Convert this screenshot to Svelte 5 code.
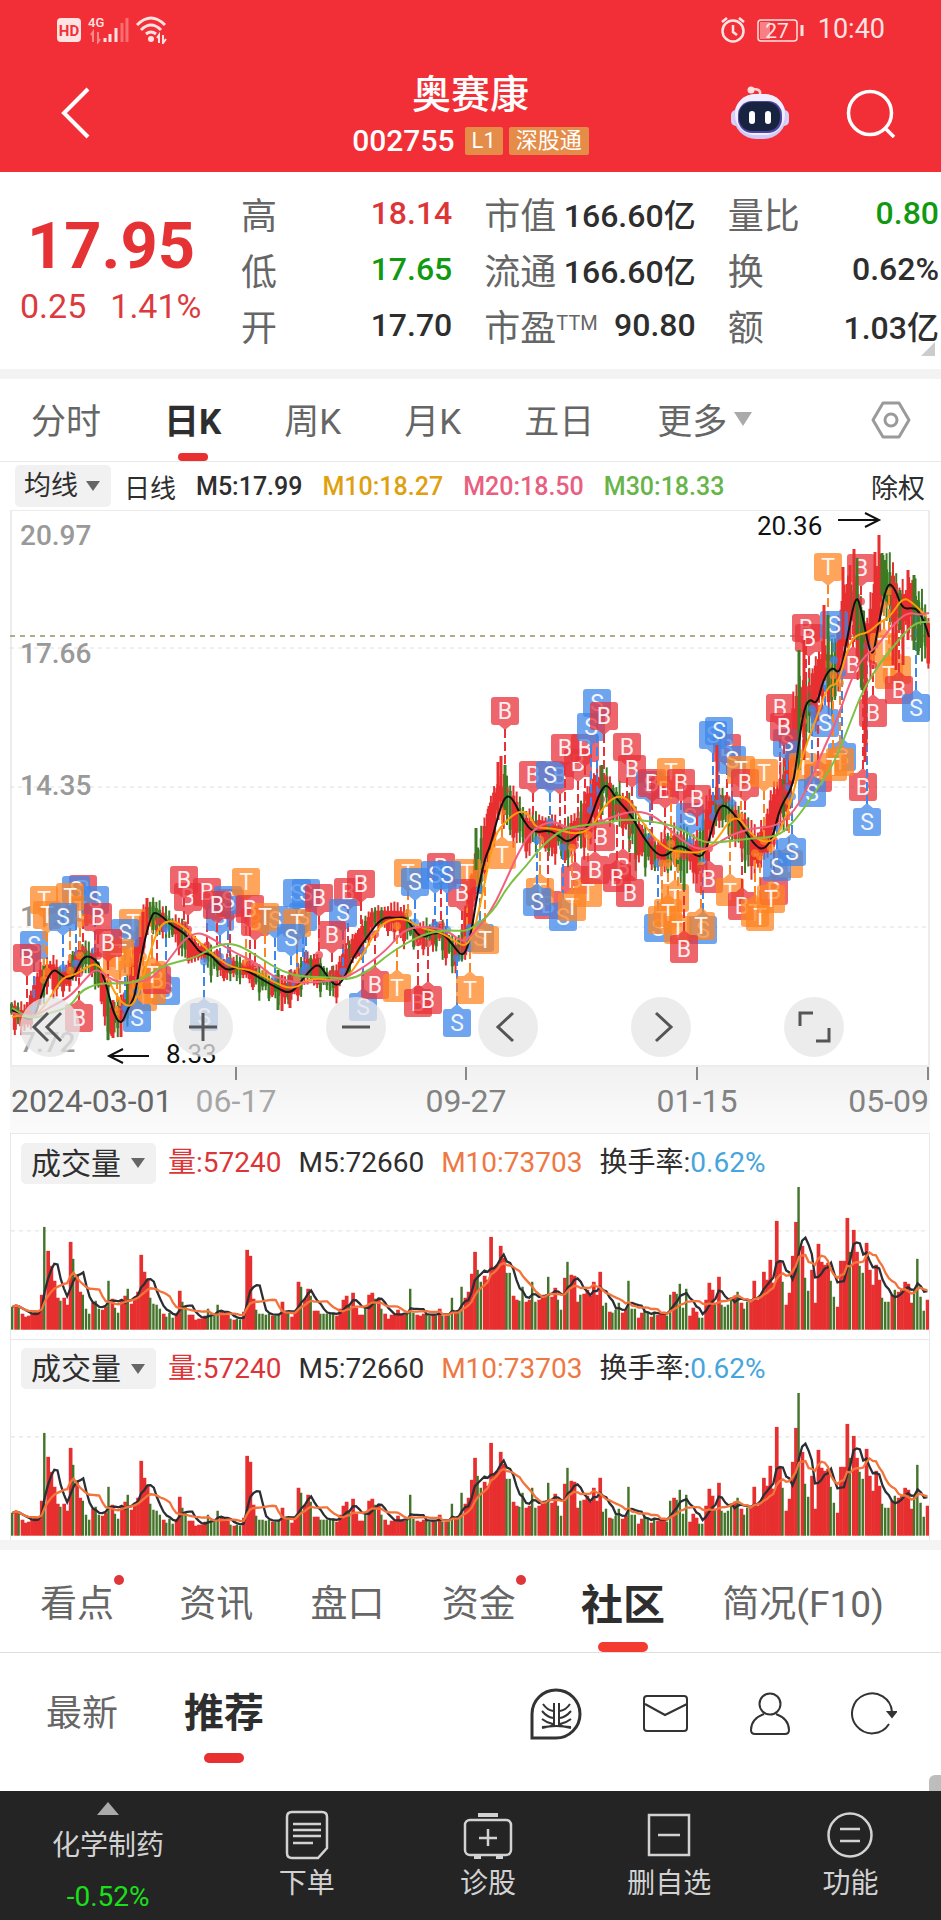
<script>
    let period = "日K";
    let section = "社区";
    let feed = "推荐";

    const periods = ["分时", "日K", "周K", "月K", "五日", "更多"];
    const sections = [
        { name: "看点", dot: true },
        { name: "资讯" },
        { name: "盘口" },
        { name: "资金", dot: true },
        { name: "社区" },
        { name: "简况(F10)" },
    ];
    const feeds = ["最新", "推荐"];

    const quotes = [
        [
            { label: "高", value: "18.14", tone: "up" },
            { label: "低", value: "17.65", tone: "down" },
            { label: "开", value: "17.70" },
        ],
        [
            { label: "市值", value: "166.60亿" },
            { label: "流通", value: "166.60亿" },
            { label: "市盈", sup: "TTM", value: "90.80" },
        ],
        [
            { label: "量比", value: "0.80", tone: "down" },
            { label: "换", value: "0.62%" },
            { label: "额", value: "1.03亿" },
        ],
    ];

    // volume per day, negative = the day closed lower
    const volumes = [
        -23, 25, -22, 16, 13, 14, 17, 18, 18, 35, -103, 79, 64, 49, 32, -29, 32, 25, 88, -71,
        55, 38, -35, -21, -16, 27, -29, -21, 20, 23, -49, 31, -22, -17, 30, 34, -41, 26, 31, 38,
        75, 58, 50, -32, -26, -25, -21, 16, -13, -17, -12, 16, 39, -28, -23, 15, 15, 10, 11, 11,
        14, -21, -15, -16, -25, 18, 15, 15, -11, 10, -11, -10, 18, 80, 74, 31, -20, -16, -16, -15,
        -16, 14, -14, -16, 28, 18, -17, 13, 17, 48, -43, 31, 41, -34, 19, 19, -16, -16, -16, -16,
        -17, 14, 21, 30, 34, -25, 37, 22, 15, 15, -22, 35, 37, -31, 31, -21, 16, 11, 15, 15,
        20, 15, 15, -16, -41, -17, 15, 14, 16, -16, -14, 15, -14, 21, -14, 14, -14, -32, 17, -18,
        -43, 32, 38, 56, 78, -60, -48, 54, 50, 93, 63, 65, 84, 72, -57, -57, 34, 30, -29, -43,
        28, 30, -48, -28, 30, 32, 33, -53, 33, 42, -30, -20, 52, -68, 55, 54, 28, -35, 36, 40,
        34, 48, 35, 58, -24, -27, 18, -17, -20, -27, 17, 20, -49, -21, -21, 12, 17, -20, -17, 13,
        -18, 15, 17, 18, -14, -35, 38, -36, -46, -22, -41, 14, 22, 18, -12, -12, 30, 47, 40, -26,
        53, -25, -23, -25, -31, 34, -38, 27, -21, -28, 30, 49, 30, 35, 58, 50, 70, 47, 109, 68,
        -48, 25, 37, 74, 108, -143, 84, -52, -39, 60, 27, 86, 68, 65, 67, -49, -33, 23, 69, 69,
        112, -78, 100, 78, -64, -57, 87, 60, 45, 65, 50, -32, -28, -28, 35, -40, 38, 41, 48, 46,
        27, -40, -71, -33, -19, 30,
    ];

    const step = 920 / volumes.length;

    function average(count) {
        return volumes
            .map((_, i) => {
                const part = volumes.slice(Math.max(0, i - count + 1), i + 1);
                const mean = part.reduce((sum, v) => sum + Math.abs(v), 0) / part.length;
                return `${((i + 0.5) * step).toFixed(1)},${(146 - mean).toFixed(1)}`;
            })
            .join(" ");
    }
    const volumeM5 = average(5);
    const volumeM10 = average(10);

    const m5 =
        "12,1010 18,1012 27,1020 35,1017 42,993 48,977 54,969 60,974 67,979 73,978 78,967 83,958 88,956 95,959 100,967 107,987 113,1012 121,1026 128,1008 135,997 140,963 147,930 152,915 155,912 163,917 172,926 183,932 193,943 200,953 210,954 217,962 227,971 237,967 250,972 263,980 277,988 290,994 300,983 310,970 319,963 328,978 337,987 345,977 353,957 367,937 382,917 397,918 405,917 413,928 421,938 433,933 443,933 453,945 463,958 470,940 478,890 485,858 490,847 497,820 503,800 509,795 515,803 523,820 533,833 550,830 560,837 568,843 580,833 588,827 597,800 603,787 608,785 617,800 630,813 643,837 657,855 667,856 677,845 687,848 700,859 707,848 715,817 722,803 733,812 743,828 757,848 765,849 773,837 780,807 793,787 798,750 803,713 809,698 817,705 823,680 832,666 840,675 847,640 856,592 862,613 872,663 878,627 887,582 895,588 902,609 913,608 918,610 925,623 929,637";
    const m10 =
        "12,1017 20,1015 33,1018 43,1008 53,993 63,977 75,975 87,967 97,963 107,977 117,997 128,1008 137,1000 147,963 157,930 167,920 180,923 200,943 217,958 233,968 253,970 273,982 293,990 310,978 333,980 347,978 360,960 380,923 403,917 420,928 440,932 453,940 465,947 472,937 480,907 493,840 503,823 520,810 530,815 535,828 553,828 577,835 593,827 603,807 617,795 630,800 647,830 667,850 683,852 703,853 717,840 735,812 753,837 767,843 777,837 790,807 803,753 817,717 828,685 838,685 847,650 855,635 868,633 880,622 890,617 903,597 913,603 927,617";
    const m20 =
        "12,1013 33,1018 50,1007 70,997 87,977 97,968 107,977 120,983 137,982 150,980 167,963 183,940 197,932 210,937 233,952 257,963 273,977 293,982 307,983 340,980 360,970 387,950 403,930 423,926 447,930 463,943 472,935 490,913 503,887 518,853 532,830 552,820 567,828 587,830 610,817 637,810 657,817 677,837 703,853 730,835 753,828 773,827 790,817 807,790 823,750 837,720 850,682 862,658 877,647 890,628 907,612 920,615 929,613";
    const m30 =
        "12,1008 20,1013 32,1019 50,1013 70,1007 80,992 93,985 107,983 127,984 143,979 160,967 177,962 197,957 213,947 228,943 243,947 263,960 283,972 303,977 330,977 350,980 370,970 390,953 417,937 440,930 460,931 470,930 493,912 507,887 527,865 540,848 557,833 570,827 603,823 627,819 657,822 680,828 703,843 723,842 753,838 777,837 793,823 810,800 823,780 837,757 850,723 863,690 880,663 893,647 907,630 918,622 929,622";

    const m5Points = m5.split(" ").map((p) => p.split(",").map(Number));

    function m5At(x) {
        const next = m5Points.findIndex((p) => p[0] >= x);
        if (next == -1) return m5Points[m5Points.length - 1][1];
        if (next == 0) return m5Points[0][1];
        const [x0, y0] = m5Points[next - 1];
        const [x1, y1] = m5Points[next];
        return y0 + ((y1 - y0) * (x - x0)) / (x1 - x0);
    }

    // rounds the corners of an average line
    function smooth(points) {
        const p = points.split(" ").map((s) => s.split(",").map(Number));
        let d = `M${p[0]}`;
        for (let i = 1; i < p.length - 1; i++) {
            d += ` Q${p[i]} ${(p[i][0] + p[i + 1][0]) / 2},${(p[i][1] + p[i + 1][1]) / 2}`;
        }
        return d + ` L${p[p.length - 1]}`;
    }

    const averages = [
        { color: "#111", d: smooth(m5) },
        { color: "#ff9d0a", d: smooth(m10) },
        { color: "#f2607d", d: smooth(m20) },
        { color: "#7cc142", d: smooth(m30) },
    ];

    const candles = volumes.map((v, i) => {
        const x = 10 + (i + 0.5) * step;
        const here = m5At(x + 2);
        const ahead = m5At(x + 9);
        const wave = Math.sin(i * 12.9898) * 43758.5453;
        const noise = wave - Math.floor(wave);
        const reach = x > 780 ? 17 : x > 480 ? 12 : 8;
        const mid = (here + ahead) / 2 + (noise - 0.5) * reach;
        const body = reach * (0.4 + noise * 0.9) + Math.abs(ahead - here) * 0.4;
        const wick = body + reach * (0.2 + ((noise * 7) % 1));
        return { x, mid, body, wick, up: v > 0 };
    });

    // long single-day ranges: x, high, low, rising
    const extremes = [
        [108, 985, 1040, 0], [113, 1000, 1038, 1], [121, 1010, 1037, 1], [147, 898, 935, 1],
        [153, 902, 930, 0], [143, 912, 950, 1], [278, 970, 1010, 0], [282, 975, 1011, 1],
        [290, 970, 1008, 1], [501, 756, 800, 1], [498, 762, 820, 1], [505, 765, 810, 0],
        [476, 828, 870, 0], [489, 806, 850, 1], [602, 765, 815, 0], [595, 775, 830, 1],
        [684, 860, 890, 0], [717, 745, 800, 1], [799, 650, 770, 0], [804, 640, 760, 1],
        [824, 605, 680, 1], [828, 615, 690, 0], [843, 567, 640, 1], [850, 565, 640, 1],
        [854, 549, 610, 1], [857, 558, 640, 0], [866, 640, 745, 1], [862, 610, 690, 0],
        [865, 650, 762, 1], [875, 552, 620, 1], [879, 535, 580, 1], [882, 553, 595, 0],
        [885, 560, 590, 0], [893, 580, 665, 1], [896, 583, 670, 1], [900, 590, 630, 0],
        [903, 600, 665, 1], [908, 570, 640, 1], [911, 583, 600, 1], [914, 575, 650, 0],
        [918, 600, 655, 0], [921, 625, 648, 0], [928, 632, 648, 1],
    ];

    const markers = [
        ["S", 34, 945], ["B", 27, 958], ["T", 44, 900], ["T", 47, 915], ["B", 83, 889], ["S", 76, 890],
        ["T", 80, 910], ["S", 95, 900], ["T", 70, 897], ["S", 63, 917], ["B", 98, 917], ["T", 133, 923],
        ["S", 125, 933], ["T", 120, 953], ["T", 117, 962], ["B", 108, 943], ["B", 79, 1018], ["S", 166, 991],
        ["T", 143, 997], ["T", 152, 990], ["B", 157, 980], ["T", 152, 975], ["S", 137, 1018],
        ["B", 188, 897], ["B", 184, 880], ["S", 204, 1017], ["B", 207, 892], ["S", 220, 917], ["B", 230, 903],
        ["S", 228, 900], ["B", 217, 905], ["T", 246, 882], ["B", 255, 922], ["B", 250, 909], ["S", 275, 920],
        ["T", 265, 917], ["S", 297, 893], ["S", 306, 893], ["S", 303, 917], ["T", 297, 923], ["S", 291, 938],
        ["B", 319, 898], ["B", 348, 892], ["S", 343, 913], ["B", 361, 884], ["B", 332, 935],
        ["S", 363, 1007], ["B", 375, 985], ["T", 397, 988], ["B", 418, 1003], ["B", 428, 1000],
        ["T", 408, 873], ["B", 441, 867], ["S", 415, 882], ["T", 467, 873], ["B", 462, 893], ["S", 435, 875],
        ["S", 447, 875], ["S", 457, 1023], ["T", 470, 990], ["S", 480, 938], ["T", 485, 940], ["T", 502, 855],
        ["B", 505, 711], ["B", 533, 775], ["B", 560, 776], ["S", 550, 775], ["B", 578, 763], ["B", 565, 748],
        ["B", 585, 748], ["S", 597, 703], ["S", 591, 727], ["B", 604, 716], ["B", 627, 747], ["B", 632, 769],
        ["S", 650, 785], ["B", 652, 783], ["B", 665, 790], ["T", 671, 772], ["B", 681, 783], ["S", 690, 817],
        ["B", 697, 799], ["B", 727, 748], ["S", 713, 735], ["S", 719, 731], ["S", 732, 760], ["T", 741, 770],
        ["B", 745, 783], ["T", 764, 773], ["B", 780, 708], ["S", 787, 743], ["B", 784, 727], ["B", 806, 628],
        ["B", 809, 638], ["T", 828, 567], ["S", 834, 625], ["B", 861, 568], ["B", 853, 665], ["T", 884, 647],
        ["T", 897, 670], ["T", 889, 675], ["B", 899, 690], ["S", 916, 708], ["B", 873, 713], ["B", 863, 787],
        ["S", 867, 822], ["S", 825, 723], ["B", 818, 778], ["T", 803, 767], ["S", 812, 793], ["S", 842, 757],
        ["T", 840, 762], ["T", 833, 767], ["B", 601, 837], ["B", 548, 905], ["T", 540, 892], ["S", 537, 902],
        ["B", 575, 880], ["S", 563, 917], ["T", 572, 907], ["T", 588, 893], ["B", 595, 870], ["B", 623, 867],
        ["B", 617, 878], ["B", 630, 893], ["S", 658, 928], ["T", 675, 898], ["T", 662, 920], ["T", 668, 913],
        ["T", 678, 930], ["S", 703, 930], ["T", 701, 926], ["B", 684, 949], ["B", 709, 879], ["T", 730, 892],
        ["B", 742, 906], ["T", 755, 913], ["T", 760, 917], ["B", 774, 891], ["T", 771, 899], ["T", 789, 864],
        ["S", 777, 867], ["S", 792, 852],
    ].map(([kind, x, y]) => {
        const target = m5At(x);
        const side = target > y ? 1 : -1;
        return { kind, x, y, side, end: Math.abs(target - y) > 24 ? target - side * 8 : y + side * 20 };
    });
    const markerColors = { B: "#e8323a", S: "#3f87ea", T: "#fd8524" };

    const priceLabels = [
        [545, "20.97"],
        [663, "17.66"],
        [795, "14.35"],
        [926, "11.04"],
        [1052, "7.72"],
    ];
    const dateTicks = [
        [236, "06-17"],
        [466, "09-27"],
        [697, "01-15"],
    ];

    const tools = [
        { name: "最早", d: "M28 16 14 30 28 44M41 16 27 30 41 44" },
        { name: "放大", d: "M16 30H44M30 16V44" },
        { name: "缩小", d: "M16 30H44" },
        { name: "左移", d: "M35 16 20 30 35 44" },
        { name: "右移", d: "M25 16 40 30 25 44" },
        { name: "全屏", d: "M16 29V16H29M45 31V44H32" },
    ];
</script>

<div class="app">
    <header>
        <div class="status">
            <svg width="112" height="30" viewBox="0 0 112 30" fill="none" aria-hidden="true">
                <rect y="4" width="24" height="24" rx="4" fill="#ffe3e3" />
                <text x="12" y="22" text-anchor="middle" font-size="15" font-weight="700" fill="#f23036">HD</text>
                <text x="31" y="13" font-size="13" font-weight="500" fill="#ffe3e3">4G</text>
                <g stroke="#ffe3e3" stroke-width="3">
                    <path d="M48 28V24M53 28V20M59 28V14" />
                    <path opacity=".35" d="M65 28V9M70 28V4" />
                    <path opacity=".5" stroke-width="2" d="M34 21 36 18V28M41 18V28L43 25" />
                </g>
                <g stroke="#ffe3e3" stroke-width="3">
                    <path d="M80 11Q94 -3 108 11M84 16Q94 6 104 16M89 20Q94 16 99 20" />
                    <path stroke-width="2" d="M100 24 102 21V29M106 21V29L109 25" />
                </g>
                <circle cx="94" cy="25" r="3" fill="#ffe3e3" />
            </svg>
            <span class="spacer"></span>
            <svg width="84" height="30" viewBox="0 0 84 30" fill="none" stroke="#ffe3e3" aria-hidden="true">
                <g stroke-width="2.5">
                    <circle cx="13" cy="17" r="10.500" />
                    <path d="M13 11V18L17 21M2 8 7 4M24 8 19 4" />
                </g>
                <rect x="38" y="6" width="39" height="21" rx="3" stroke-width="1.500" />
                <rect x="40" y="8" width="10" height="17" fill="#ffe3e3" opacity=".45" stroke="none" />
                <path d="M82 11V22" stroke-width="3" />
                <text x="57" y="24" text-anchor="middle" font-size="21" fill="#ffe3e3" stroke="none">27</text>
            </svg>
            <time>10:40</time>
        </div>
        <div class="title-bar">
            <button class="back" aria-label="返回">
                <svg width="30" height="52" viewBox="0 0 30 52" fill="none" stroke="#fff" stroke-width="4">
                    <path d="M27 2 3 26 27 50" />
                </svg>
            </button>
            <div class="title">
                <h1>奥赛康</h1>
                <div class="code">
                    <span class="number">002755</span>
                    <span class="tag">L1</span>
                    <span class="tag">深股通</span>
                </div>
            </div>
            <div class="actions">
                <button aria-label="智能助手">
                    <svg width="58" height="54" viewBox="0 0 58 54">
                        <path d="M29 9C30 4 27 3 21 3" fill="none" stroke="#ffd5d8" stroke-width="2.500" />
                        <circle cx="20" cy="4" r="3.500" fill="#ffdfe2" />
                        <rect x="0" y="24" width="10" height="16" rx="5" fill="#d6d0f8" />
                        <rect x="48" y="24" width="10" height="16" rx="5" fill="#d6d0f8" />
                        <rect x="3" y="8" width="52" height="45" rx="22" fill="#cfcaf8" />
                        <rect x="4" y="8" width="50" height="41" rx="20" fill="#f0edff" />
                        <rect x="7" y="15" width="44" height="32" rx="14" fill="#4c46a0" />
                        <rect x="8" y="16" width="41" height="29" rx="13" fill="#18243f" />
                        <rect x="18" y="25" width="6" height="13" rx="3" fill="#fff" />
                        <rect x="34" y="25" width="6" height="13" rx="3" fill="#fff" />
                    </svg>
                </button>
                <button aria-label="搜索">
                    <svg width="50" height="50" viewBox="0 0 50 50" fill="none" stroke="#fff" stroke-width="3.500">
                        <circle cx="24" cy="25" r="21.500" />
                        <path d="M39 40 48 49" />
                    </svg>
                </button>
            </div>
        </div>
    </header>

    <section class="quote">
        <div class="price">
            <strong>17.95</strong>
            <div class="change"><span>0.25</span><span>1.41%</span></div>
        </div>
        {#each quotes as column}
            <dl>
                {#each column as item}
                    <div>
                        <dt>{item.label}{#if item.sup}<sup>{item.sup}</sup>{/if}</dt>
                        <dd class={item.tone}>{item.value}</dd>
                    </div>
                {/each}
            </dl>
        {/each}
        <i class="corner"></i>
    </section>

    <nav class="periods">
        {#each periods as name}
            <button class:active={period == name} on:click={() => (period = name)}>
                {name}
                {#if name == "更多"}<i class="caret light"></i>{/if}
            </button>
        {/each}
        <button class="settings" aria-label="设置">
            <svg width="40" height="38" viewBox="0 0 40 38" fill="none" stroke="#9a9a9a" stroke-width="3">
                <path d="M12 2H28L38 19 28 36H12L2 19Z" stroke-linejoin="round" />
                <circle cx="20" cy="19" r="6" />
            </svg>
        </button>
    </nav>

    <div class="legend">
        <label class="drop">
            <select aria-label="指标"><option>均线</option></select>
            <i class="caret"></i>
        </label>
        <span>日线</span>
        <span class="number">M5:17.99</span>
        <span class="number" style="color: #dfa010">M10:18.27</span>
        <span class="number" style="color: #e8607f">M20:18.50</span>
        <span class="number" style="color: #67b548">M30:18.33</span>
        <button>除权</button>
    </div>

    <div class="chart">
        <svg viewBox="10 510 920 623" role="img" aria-label="日K">
            <defs>
                <linearGradient id="axis" x1="0" y1="0" x2="0" y2="1">
                    <stop offset="0" stop-color="#f1f1f1" />
                    <stop offset="1" stop-color="#fbfbfb" />
                </linearGradient>
            </defs>
            <rect x="10" y="1066" width="920" height="67" fill="url(#axis)" />
            <rect x="11" y="510" width="918" height="556" fill="#fff" stroke="#ececec" stroke-width="2" />
            <path d="M10 648H930M10 787H930M10 927H930" stroke="#e0e0e0" stroke-dasharray="4 4" />
            <g class="axis-text">
                {#each priceLabels as [y, text]}
                    <text x="20" {y}>{text}</text>
                {/each}
            </g>
            <path d="M10 636H930" stroke="#b0ad86" stroke-width="2" stroke-dasharray="5 5" />

            {#each candles as c}
                <path
                    d="M{c.x} {c.mid - c.wick}V{c.mid + c.wick}"
                    stroke={c.up ? "#e03030" : "#3c7a24"}
                    stroke-width="2"
                />
                <path
                    d="M{c.x} {c.mid - c.body}V{c.mid + c.body}"
                    stroke={c.up ? "#e82f2f" : "#3c7a24"}
                    stroke-width={c.up ? 4 : 3}
                />
            {/each}

            {#each markers as m}
                <g stroke={markerColors[m.kind]} fill={markerColors[m.kind]}>
                    <path d="M{m.x} {m.y + m.side * 18}V{m.end}" stroke-width="2" stroke-dasharray="9 4" />
                    <circle cx={m.x} cy={m.end} r="4" stroke="none" opacity=".7" />
                    <path
                        d="M{m.x - 6} {m.y + m.side * 14}L{m.x} {m.y + m.side * 19}L{m.x + 6} {m.y + m.side * 14}Z"
                        stroke="none"
                        opacity=".75"
                    />
                    <rect x={m.x - 14} y={m.y - 14} width="28" height="28" rx="3" stroke="none" opacity=".75" />
                </g>
                <text class="mark" x={m.x} y={m.y + 8} opacity=".9">{m.kind}</text>
            {/each}

            {#each extremes as [x, high, low, up]}
                <path d="M{x} {high}V{low}" stroke={up ? "#e82f2f" : "#3c7a24"} stroke-width="3" />
            {/each}

            {#each averages as line}
                <path d={line.d} fill="none" stroke={line.color} stroke-width="2" />
            {/each}

            <g class="peak">
                <text x="757" y="535">20.36</text>
                <text x="166" y="1063">8.33</text>
                <path d="M838 520H879M865 513 879 520 865 527" />
                <path d="M149 1056H109M123 1049 109 1056 123 1063" />
            </g>

            <g class="dates">
                <text x="11" y="1112" fill="#666">2024-03-01</text>
                {#each dateTicks as [x, text], i}
                    <path d="M{x} 1067V1080" />
                    <text {x} y="1112" text-anchor="middle" fill={i == 0 ? "#a6a6a6" : "#828282"}>{text}</text>
                {/each}
                <path d="M928 1067V1080" />
                <text x="929" y="1112" text-anchor="end" fill="#828282">05-09</text>
            </g>
        </svg>
        <div class="tools">
            {#each tools as tool}
                <button aria-label={tool.name}>
                    <svg viewBox="0 0 60 60" fill="none" stroke="#555" stroke-width="3"><path d={tool.d} /></svg>
                </button>
            {/each}
        </div>
    </div>

    {#each [1, 2] as panel}
        <section class="volume">
            <div class="legend">
                <label class="drop">
                    <select aria-label="副图指标 {panel}"><option>成交量</option></select>
                    <i class="caret"></i>
                </label>
                <span style="color: #dc3538">量:57240</span>
                <span>M5:72660</span>
                <span style="color: #ee7843">M10:73703</span>
                <span>换手率:<em>0.62%</em></span>
            </div>
            <svg viewBox="0 0 920 155" role="img" aria-label="成交量">
                <path d="M0 47H920" stroke="#e0e0e0" stroke-dasharray="4 4" />
                {#each volumes as v, i}
                    <rect
                        x={i * step}
                        y={146 - Math.abs(v)}
                        width={v > 0 ? step + 0.5 : step - 0.8}
                        height={Math.abs(v)}
                        fill={v > 0 ? "#e72f2f" : "#44742a"}
                    />
                {/each}
                <polyline points={volumeM5} stroke="#2b2f33" />
                <polyline points={volumeM10} stroke="#f4733a" />
            </svg>
        </section>
    {/each}

    <nav class="sections">
        {#each sections as item}
            <button
                class:active={section == item.name}
                class:dot={item.dot}
                on:click={() => (section = item.name)}
            >
                {item.name}
            </button>
        {/each}
    </nav>

    <div class="feed">
        {#each feeds as name}
            <button class:active={feed == name} on:click={() => (feed = name)}>{name}</button>
        {/each}
        <div class="feed-icons">
            <button aria-label="社区话题">
                <svg width="52" height="52" viewBox="0 0 52 52">
                    <path stroke-width="3" d="M2 50V26A24 24 0 1 1 26 50Z" />
                    <path d="M24 15V37Q20 39 12 39M29 15V37Q33 39 41 39M12 40Q26 36 41 40M13 16Q17 22 23 23M12 23Q17 29 23 30M12 31Q17 35 23 36M40 16Q36 22 30 23M41 23Q36 29 30 30M41 31Q36 35 30 36" />
                </svg>
            </button>
            <button aria-label="消息">
                <svg width="46" height="38" viewBox="0 0 46 38">
                    <rect x="1" y="1" width="43" height="35" rx="3" />
                    <path d="M2 9 22 20 44 9" />
                </svg>
            </button>
            <button aria-label="我的">
                <svg width="40" height="44" viewBox="0 0 40 44">
                    <circle cx="20" cy="12" r="10.500" />
                    <path d="M14 22Q1 27 1 38 1 42 5 42H35Q39 42 39 38 39 27 26 22" />
                </svg>
            </button>
            <button aria-label="刷新">
                <svg width="46" height="44" viewBox="0 0 46 44">
                    <path d="M38 32A20 20 0 1 1 41 20" />
                    <path d="M37 20H45L41 25Z" fill="#333" />
                </svg>
            </button>
        </div>
        <i class="scroll"></i>
    </div>

    <footer>
        <button class="industry">
            <i class="up-caret"></i>
            <span>化学制药</span>
            <b>-0.52%</b>
        </button>
        <button>
            <svg width="44" height="50" viewBox="0 0 44 50">
                <path d="M7 2H37Q42 2 42 7V38L33 48H7Q2 48 2 43V7Q2 2 7 2Z" />
                <path d="M8 14H36M8 20H36M8 26H36M8 33H28" />
            </svg>
            下单
        </button>
        <button>
            <svg width="50" height="50" viewBox="0 0 50 50">
                <path d="M15 5H35M11 47H18M33 47H40" stroke-width="4" />
                <rect x="2" y="10" width="46" height="35" rx="5" />
                <path d="M25 19V36M16 28H34" />
            </svg>
            诊股
        </button>
        <button>
            <svg width="44" height="50" viewBox="0 0 44 50">
                <rect x="2" y="5" width="40" height="40" />
                <path d="M11 25H33" />
            </svg>
            删自选
        </button>
        <button>
            <svg width="46" height="50" viewBox="0 0 46 50">
                <circle cx="23" cy="25" r="21.500" />
                <path d="M13 19H33M13 31H33" />
            </svg>
            功能
        </button>
    </footer>
</div>

<style>
    :global(body) {
        background: #fff;
    }

    .app {
        font-family: Roboto, "Noto Sans CJK SC", sans-serif;
        color: #2e2e2e;
        overflow: hidden;
    }

    button,
    select {
        margin: 0;
        padding: 0;
        border: 0;
        background: none;
        color: inherit;
        font: inherit;
        white-space: nowrap;
    }

    svg {
        display: block;
    }

    header {
        background: #f22f36;
        color: #fff;
    }

    .status {
        display: flex;
        align-items: center;
        height: 58px;
        padding: 0 58px 0 57px;
        font-size: 27px;
        color: #ffe3e3;
    }

    .spacer {
        flex: 1;
    }

    .status time {
        margin-left: 14px;
        margin-right: -2px;
    }

    .title-bar {
        display: grid;
        grid-template-columns: 1fr auto 1fr;
        align-items: center;
        height: 114px;
        padding: 0 45px 4px;
        box-sizing: border-box;
    }

    .back {
        justify-self: start;
        margin-left: 16px;
    }

    .title {
        display: flex;
        flex-direction: column;
        align-items: center;
        gap: 4px;
    }

    h1 {
        margin: 0;
        font-size: 39px;
        font-weight: 500;
        line-height: 52px;
    }

    .code {
        display: flex;
        align-items: center;
        gap: 6px;
        line-height: 32px;
    }

    .code .number {
        font-size: 30px;
        margin-right: 4px;
    }

    .tag {
        padding: 0 7px;
        border-radius: 2px;
        background: #e58c48;
        font-size: 22px;
        line-height: 28px;
    }

    .actions {
        justify-self: end;
        display: flex;
        align-items: center;
        gap: 57px;
    }

    .number {
        font-weight: 500;
    }

    .quote {
        position: relative;
        display: flex;
        gap: 32px;
        padding: 13px 2px 16px 20px;
        border-bottom: 10px solid #f3f3f3;
    }

    .price {
        flex: 1;
        display: flex;
        flex-direction: column;
        justify-content: center;
        gap: 2px;
        color: #e53235;
    }

    .price strong {
        padding-left: 7px;
        font-size: 65px;
        font-weight: 700;
        line-height: 72px;
    }

    .change {
        display: flex;
        gap: 24px;
        font-size: 34px;
        line-height: 44px;
        color: #dc3a3f;
        white-space: nowrap;
    }

    dl {
        flex: 0 0 23%;
        margin: 0;
    }

    dl div {
        display: flex;
        justify-content: space-between;
        align-items: center;
        height: 56px;
        white-space: nowrap;
    }

    dt {
        font-size: 36px;
        color: #666;
    }

    sup {
        font-size: 20px;
        line-height: 0;
        vertical-align: 11px;
    }

    dd {
        margin: 0;
        font-size: 32px;
        font-weight: 500;
    }

    .up {
        color: #dc3538;
    }

    .down {
        color: #119a11;
    }

    .corner {
        position: absolute;
        right: 6px;
        bottom: 13px;
        border-left: 14px solid transparent;
        border-bottom: 14px solid #ccc;
    }

    .periods {
        display: flex;
        gap: 63px;
        height: 82px;
        padding: 0 30px 0 31px;
        border-bottom: 1px solid #e8e8e8;
        font-size: 35px;
        color: #666;
    }

    .periods button,
    .sections button,
    .feed > button {
        position: relative;
        display: flex;
        align-items: center;
    }

    .periods button:not(.settings) {
        padding-bottom: 3px;
    }

    .periods .settings {
        margin-left: auto;
    }

    .active {
        font-weight: 700;
        color: #2e2e2e;
    }

    .active::after {
        content: "";
        position: absolute;
        left: 50%;
        bottom: 0;
        width: 30px;
        height: 8px;
        border-radius: 4px;
        background: #e83030;
        transform: translateX(-50%);
    }

    .caret {
        border: 7px solid transparent;
        border-top: 10px solid #666;
        border-bottom: 0;
    }

    .caret.light {
        margin-left: 7px;
        border-width: 14px 9px 0;
        border-top-color: #aaa;
    }

    .legend {
        display: flex;
        align-items: center;
        gap: 20px;
        height: 48px;
        padding: 0 16px 0 15px;
        font-size: 25px;
        white-space: nowrap;
    }

    .legend > :first-child {
        margin-right: -7px;
    }

    .legend > :nth-child(2) {
        font-size: 26px;
    }

    .legend button {
        margin-left: auto;
        font-size: 27px;
    }

    .drop {
        display: grid;
        align-items: center;
        border-radius: 5px;
        background: #f1f1f1;
    }

    .drop > * {
        grid-area: 1 / 1;
    }

    .drop select {
        appearance: none;
        height: 42px;
        padding: 0 33px 0 9px;
        font-size: 27px;
    }

    .drop .caret {
        justify-self: end;
        margin-right: 11px;
        pointer-events: none;
    }

    .chart {
        position: relative;
        margin: 0 11px 0 10px;
    }

    .axis-text {
        font-size: 28px;
        font-weight: 500;
        fill: #999;
    }

    .mark {
        font-size: 23px;
        text-anchor: middle;
        fill: #fff;
    }

    .peak {
        font-size: 26px;
        fill: #111;
    }

    .peak path {
        fill: none;
        stroke: #111;
        stroke-width: 2;
    }

    .dates {
        font-size: 32px;
    }

    .dates path {
        stroke: #888;
        stroke-width: 2;
    }

    .tools {
        position: absolute;
        left: 10px;
        right: 86px;
        bottom: 76px;
        display: flex;
        justify-content: space-between;
    }

    .tools button {
        width: 60px;
        height: 60px;
        border-radius: 50%;
        background: rgba(230, 230, 230, 0.75);
    }

    .volume {
        margin: 0 11px 0 10px;
        border: 1px solid #e8e8e8;
        border-bottom: 0;
    }

    .volume .legend {
        gap: 17px;
        height: 42px;
        padding: 8px 10px 0;
    }

    .volume .legend > :first-child {
        margin-right: -5px;
    }

    .volume .legend span {
        font-size: 28px;
        line-height: 42px;
    }

    .volume select {
        height: 41px;
        padding: 0 35px 0 10px;
        font-size: 30px;
    }

    .volume em {
        font-style: normal;
        color: #45a5dc;
    }

    polyline {
        fill: none;
        stroke-width: 2.3;
    }

    .sections {
        position: relative;
        display: flex;
        justify-content: space-between;
        height: 102px;
        margin-top: -4px;
        padding: 0 57px 0 40px;
        border-top: 10px solid #f5f4f4;
        border-bottom: 1px solid #dcdfdf;
        font-size: 37px;
        color: #666;
    }

    .sections .active {
        font-size: 42px;
    }

    .sections .active::after {
        width: 50px;
        height: 10px;
        border-radius: 5px;
        background: #f43b30;
    }

    .dot {
        padding-right: 8px;
    }

    .dot::before {
        content: "";
        position: absolute;
        top: 25px;
        right: -2px;
        width: 10px;
        height: 10px;
        border-radius: 50%;
        background: #e0363a;
    }

    .feed {
        position: relative;
        display: flex;
        align-items: center;
        gap: 66px;
        height: 138px;
        padding: 0 44px 0 46px;
        box-sizing: border-box;
        font-size: 36px;
        color: #666;
    }

    .feed > button {
        height: 76px;
        padding: 15px 0;
        margin-bottom: 24px;
        box-sizing: content-box;
    }

    .feed .active {
        font-size: 40px;
    }

    .feed .active::after {
        width: 40px;
        height: 10px;
        border-radius: 5px;
    }

    .feed-icons {
        display: flex;
        align-items: center;
        gap: 61px;
        margin: 0 0 16px auto;
    }

    .feed-icons svg {
        fill: none;
        stroke: #333;
        stroke-width: 2;
    }

    .scroll {
        position: absolute;
        right: 0;
        bottom: 0;
        width: 12px;
        height: 16px;
        border-radius: 6px 0 0 0;
        background: #bdbdbd;
    }

    footer {
        display: grid;
        grid-template-columns: 216fr repeat(4, 181fr);
        height: 130px;
        background: #242424;
        color: #d2d2d2;
        font-size: 28px;
    }

    footer button {
        display: flex;
        flex-direction: column;
        align-items: center;
        gap: 4px;
        padding-top: 19px;
        line-height: 40px;
    }

    footer svg {
        fill: none;
        stroke: #d2d2d2;
        stroke-width: 2.5;
    }

    footer .industry {
        gap: 11px;
        padding-top: 11px;
    }

    .up-caret {
        border: 11px solid transparent;
        border-bottom: 13px solid #aaa;
        border-top: 0;
    }

    .industry b {
        font-weight: 400;
        color: #19e019;
    }
</style>
